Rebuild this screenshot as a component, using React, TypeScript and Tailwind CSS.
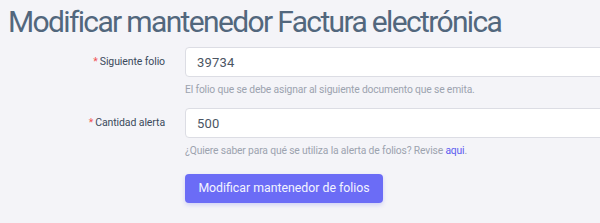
import React from "react";

const font = { fontFamily: "Roboto, 'Noto Sans', sans-serif" };

function Field({
  label,
  value,
  help,
}: {
  label: string;
  value: string;
  help: React.ReactNode;
}) {
  return (
    <div className="flex">
      <div className="w-[165px] shrink-0 flex justify-end items-start pt-[6px]">
        <label className="text-[10.5px] tracking-[-0.1px] text-[#3b4a5c] leading-[18px] whitespace-nowrap">
          <span className="text-[#f05252] mr-[2px]">*</span>
          {label}
        </label>
      </div>
      <div className="ml-[20px] flex-1 min-w-0">
        <input
          readOnly
          value={value}
          className="w-[460px] h-[30px] rounded-[4px] border border-[#dcdde4] bg-white px-[11px] text-[13px] tracking-[0.2px] text-[#4b5563] outline-none"
          style={font}
        />
        <p className="mt-[5px] text-[10.3px] tracking-[-0.15px] leading-[16px] text-[#9ca3af] whitespace-nowrap">
          {help}
        </p>
      </div>
    </div>
  );
}

export default function App() {
  return (
    <div className="w-[600px] h-[223px] overflow-hidden bg-[#f4f4f8]" style={font}>
      <h1 className="pl-[8px] pt-[2px] text-[30px] leading-[40px] tracking-[-1.65px] text-[#52677d] whitespace-nowrap">
        Modificar mantenedor Factura electrónica
      </h1>
      <div className="mt-[5px] flex flex-col gap-[10px]">
        <Field
          label="Siguiente folio"
          value="39734"
          help="El folio que se debe asignar al siguiente documento que se emita."
        />
        <Field
          label="Cantidad alerta"
          value="500"
          help={
            <>
              ¿Quiere saber para qué se utiliza la alerta de folios? Revise{" "}
              <a className="text-[#5b5bf0]">aqui</a>.
            </>
          }
        />
      </div>
      <div className="ml-[185px] mt-[15px]">
        <button className="w-[198px] h-[29px] rounded-[4px] bg-[#6b6cf6] text-[12.3px] text-[#f3f4ff] whitespace-nowrap shadow-[0_2px_4px_rgba(99,102,241,0.25)]">
          Modificar mantenedor de folios
        </button>
      </div>
    </div>
  );
}
